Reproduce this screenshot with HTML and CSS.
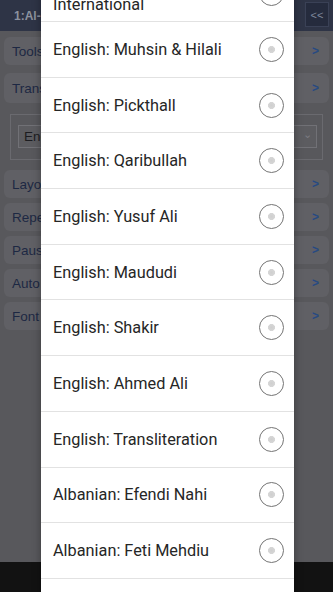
FILE: index.html
```html
<!DOCTYPE html>
<html lang="en">
<head>
    <meta charset="UTF-8">
    <meta name="viewport" content="width=device-width, initial-scale=1.0">
    <title>Settings - Translation</title>
    <link rel="stylesheet" href="styles.css">
</head>
<body>
    <div class="app">
        <div class="top-bar">
            <span class="top-title">1:Al-Fatiha</span>
            <button class="back-btn">&lt;&lt;</button>
        </div>

        <div class="settings">
            <div class="setting-row"><span>Tools</span><span class="chev">&gt;</span></div>
            <div class="setting-row tall"><span>Translation</span><span class="chev">&gt;</span></div>
            <div class="select-box">
                <div class="select"><span>English: Saheeh International</span><span class="arrow">&#8964;</span></div>
            </div>
            <div class="setting-row"><span>Layout</span><span class="chev">&gt;</span></div>
            <div class="setting-row"><span>Repeat</span><span class="chev">&gt;</span></div>
            <div class="setting-row"><span>Pause</span><span class="chev">&gt;</span></div>
            <div class="setting-row"><span>Auto scroll</span><span class="chev">&gt;</span></div>
            <div class="setting-row"><span>Font size</span><span class="chev">&gt;</span></div>
        </div>

        <div class="nav-bar"></div>
    </div>

    <!-- translation picker dialog (scrolled) -->
    <div class="dialog">
        <ul class="options" id="options">
            <li class="option"><span>English: Saheeh International</span><i class="radio"></i></li>
            <li class="option"><span>English: Muhsin &amp; Hilali</span><i class="radio"></i></li>
            <li class="option"><span>English: Pickthall</span><i class="radio"></i></li>
            <li class="option"><span>English: Qaribullah</span><i class="radio"></i></li>
            <li class="option"><span>English: Yusuf Ali</span><i class="radio"></i></li>
            <li class="option"><span>English: Maududi</span><i class="radio"></i></li>
            <li class="option"><span>English: Shakir</span><i class="radio"></i></li>
            <li class="option"><span>English: Ahmed Ali</span><i class="radio"></i></li>
            <li class="option"><span>English: Transliteration</span><i class="radio"></i></li>
            <li class="option"><span>Albanian: Efendi Nahi</span><i class="radio"></i></li>
            <li class="option"><span>Albanian: Feti Mehdiu</span><i class="radio"></i></li>
            <li class="option"><span>Amharic: Sadiq and Sani</span><i class="radio"></i></li>
        </ul>
    </div>
</body>
</html>
```

FILE: styles.css
```css
* {
    margin: 0;
    padding: 0;
    box-sizing: border-box;
}

html, body {
    height: 100%;
    overflow: hidden;
}

body {
    background-color: #58585c;
    font-family: 'Liberation Sans', Arial, sans-serif;
}

.app {
    height: 592px;
    display: flex;
    flex-direction: column;
}

/* dimmed page behind the dialog */
.top-bar {
    height: 31px;
    background-color: #2e3446;
    display: flex;
    align-items: center;
    justify-content: space-between;
    padding: 0 4px 0 14px;
}

.top-title {
    color: #8c919e;
    font-size: 12px;
    font-weight: bold;
    white-space: nowrap;
}

.back-btn {
    width: 24px;
    height: 25px;
    margin-top: -2px;
    background-color: #252b3d;
    border: 1px solid #3a4156;
    color: #7e879b;
    font-size: 11px;
    font-family: 'Liberation Sans', Arial, sans-serif;
}

.settings {
    flex: 1;
    padding: 6px 4px 0;
    display: flex;
    flex-direction: column;
    gap: 5px;
}

.setting-row {
    height: 28px;
    background-color: #606065;
    border-radius: 6px;
    display: flex;
    align-items: center;
    justify-content: space-between;
    padding: 0 10px 0 8px;
    color: #1d2843;
    font-size: 13.5px;
    white-space: nowrap;
}

.setting-row.tall {
    height: 30px;
    margin-top: 3px;
}

.chev {
    color: #274a82;
    font-weight: bold;
    font-size: 12px;
}

.select-box {
    margin: 6px 6px 5px;
    height: 46px;
    border: 1px solid #6a6a6f;
    padding: 10px 5px 0 7px;
}

.select {
    height: 23px;
    border: 1px solid #717176;
    background-color: #5c5c60;
    display: flex;
    align-items: center;
    justify-content: space-between;
    padding: 0 4px 0 5px;
    color: #1c1c20;
    font-size: 13.5px;
    white-space: nowrap;
    overflow: hidden;
}

.arrow {
    color: #7b7b80;
    font-size: 11px;
    margin-top: -4px;
}

.nav-bar {
    height: 30px;
    background-color: #121212;
}

/* dialog */
.dialog {
    position: absolute;
    left: 41px;
    top: -33.7px;
    width: 253px;
    background-color: #fff;
    box-shadow: 0 2px 8px rgba(0,0,0,0.35);
}

.options {
    list-style: none;
}

.option {
    min-height: 55.7px;
    display: flex;
    align-items: center;
    justify-content: space-between;
    padding: 1px 10px 0 12px;
    border-bottom: 1px solid #e2e2e2;
    font-family: Roboto, 'Noto Sans', sans-serif;
    font-size: 16.3px;
    line-height: 22px;
    color: #262626;
}

.option span {
    max-width: 198px;
}

.radio {
    flex: none;
    width: 25px;
    height: 25px;
    margin-top: -1px;
    border: 1.5px solid #747474;
    border-radius: 50%;
    background: radial-gradient(circle, #cfcfcf 0, #d6d6d6 3.2px, transparent 3.8px);
}
```
